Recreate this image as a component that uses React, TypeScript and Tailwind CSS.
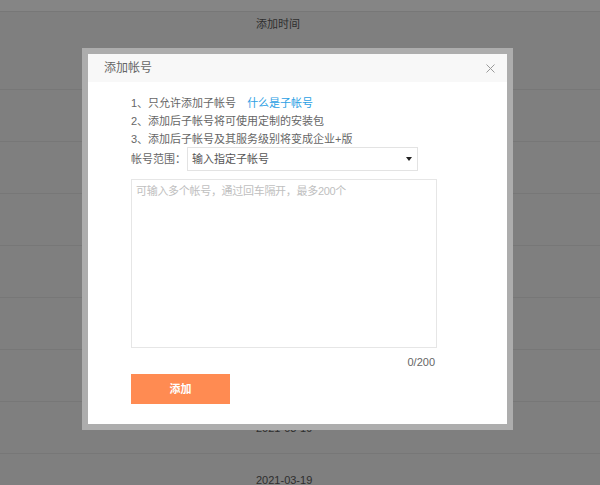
import React from "react";

const rows = Array.from({ length: 8 });

export default function App() {
  return (
    <div className="relative w-[600px] h-[485px] overflow-hidden bg-[#7f7f7f] font-['Liberation_Sans','Noto_Sans_CJK_SC',sans-serif]">
      {/* background table */}
      <div className="flex flex-col">
        <div className="h-[12px] bg-[#858585] border-b border-[#777777]" />
        <div className="h-[78px] border-b border-[#777777] pl-[256px] pt-[5px] text-[11px] leading-[14px] text-[#2e2e2e]">
          添加时间
        </div>
        {rows.map((_, i) => (
          <div
            key={i}
            className="h-[52px] border-b border-[#777777] pl-[256px] flex items-center text-[11px] leading-[14px] text-[#2e2e2e]"
          >
            2021-03-19
          </div>
        ))}
      </div>

      {/* modal */}
      <div className="absolute left-[82px] top-[48px] w-[431px] h-[382px] bg-[#adadad] p-[6px]">
        <div className="w-full h-full bg-white flex flex-col">
          <div className="h-[28px] bg-[#f8f8f8] flex items-center justify-between pl-[16px] pr-[12px]">
            <span className="text-[12px] text-[#666666] leading-[14px]">添加帐号</span>
            <svg width="9" height="9" viewBox="0 0 9 9" className="text-[#9a9a9a]">
              <path d="M0.5 0.5 L8.5 8.5 M8.5 0.5 L0.5 8.5" stroke="currentColor" strokeWidth="1" fill="none" />
            </svg>
          </div>
          <div className="pl-[43px] pt-[12px] flex flex-col text-[11px] text-[#666666]">
            <div className="leading-[18px] flex">
              <span>1、只允许添加子帐号</span>
              <span className="ml-[11px] text-[#2ba0e4]">什么是子帐号</span>
            </div>
            <div className="leading-[18px]">2、添加后子帐号将可使用定制的安装包</div>
            <div className="leading-[18px]">3、添加后子帐号及其服务级别将变成企业+版</div>
            <div className="flex items-center mt-[-1px]">
              <span className="w-[56px] leading-[14px]">帐号范围：</span>
              <div className="w-[231px] h-[24px] border border-[#e3e3e3] flex items-center justify-between pl-[4px] pr-[5px]">
                <span className="text-[#555555] leading-[14px]">输入指定子帐号</span>
                <span className="w-0 h-0 border-l-[3px] border-r-[3px] border-t-[4px] border-l-transparent border-r-transparent border-t-[#222222]" />
              </div>
            </div>
            <div className="mt-[8px] w-[306px] h-[169px] border border-[#e6e6e6] pl-[4px] pt-[4px] text-[#c0c0c0] leading-[14px] tracking-[-0.3px]">
              可输入多个帐号，通过回车隔开，最多200个
            </div>
            <div className="w-[306px] mt-[7px] pr-[2px] text-right leading-[14px] text-[#666666]">0/200</div>
            <button className="mt-[5px] w-[99px] h-[30px] bg-[#ff8b52] text-white font-bold text-[11px] leading-[14px] flex items-center justify-center">
              添加
            </button>
          </div>
        </div>
      </div>
    </div>
  );
}
